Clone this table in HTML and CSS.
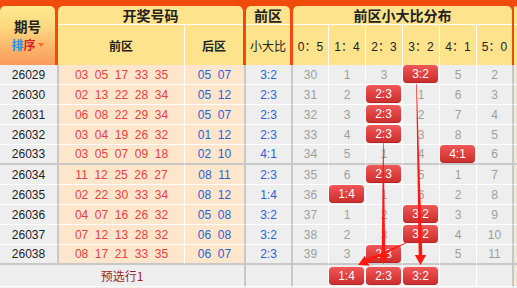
FILE: index.html
```html
<!DOCTYPE html>
<html lang="zh-CN">
<head>
<meta charset="utf-8">
<title>前区小大比分布</title>
<link rel="stylesheet" href="styles.css">
</head>
<body>
<div class="board">
  <div class="head">
    <div class="h-issue">
      <div class="h-issue-title">期号</div>
      <div class="sort"><span class="s1">排</span><span class="s2">序</span><span class="caret"></span></div>
    </div>
    <div class="grp g-draw">
      <div class="g-title">开奖号码</div>
      <div class="g-sub">
        <div class="sub sub-front b">前区</div>
        <div class="sub sub-back b">后区</div>
      </div>
    </div>
    <div class="grp g-ratio">
      <div class="g-title">前区</div>
      <div class="g-sub">
        <div class="sub sub-ratio">小大比</div>
      </div>
    </div>
    <div class="grp g-dist">
      <div class="g-title">前区小大比分布</div>
      <div class="g-sub">
        <div class="sub sd0">0：5</div>
        <div class="sub sd">1：4</div>
        <div class="sub sd">2：3</div>
        <div class="sub sd">3：2</div>
        <div class="sub sd">4：1</div>
        <div class="sub sd5">5：0</div>
      </div>
    </div>
    <div class="grp g-extra"><div class="g-title"></div><div class="g-sub"><div class="sub"></div></div></div>
  </div>

  <div class="rows">
    <div class="row">
      <div class="c issue">26029</div>
      <div class="c front"><span>03</span><span>05</span><span>17</span><span>33</span><span>35</span></div>
      <div class="c back"><span>05</span><span>07</span></div>
      <div class="c ratio">3:2</div>
      <div class="c d d0">30</div><div class="c d">1</div><div class="c d">3</div><div class="c d hit"><span class="badge">3:2</span></div><div class="c d">5</div><div class="c d d5">2</div>
      <div class="c x"></div>
    </div>
    <div class="row">
      <div class="c issue">26030</div>
      <div class="c front"><span>02</span><span>13</span><span>22</span><span>28</span><span>34</span></div>
      <div class="c back"><span>05</span><span>12</span></div>
      <div class="c ratio">2:3</div>
      <div class="c d d0">31</div><div class="c d">2</div><div class="c d hit"><span class="badge">2:3</span></div><div class="c d">1</div><div class="c d">6</div><div class="c d d5">3</div>
      <div class="c x"></div>
    </div>
    <div class="row">
      <div class="c issue">26031</div>
      <div class="c front"><span>06</span><span>08</span><span>22</span><span>29</span><span>34</span></div>
      <div class="c back"><span>05</span><span>07</span></div>
      <div class="c ratio">2:3</div>
      <div class="c d d0">32</div><div class="c d">3</div><div class="c d hit"><span class="badge">2:3</span></div><div class="c d">2</div><div class="c d">7</div><div class="c d d5">4</div>
      <div class="c x"></div>
    </div>
    <div class="row">
      <div class="c issue">26032</div>
      <div class="c front"><span>03</span><span>04</span><span>19</span><span>26</span><span>32</span></div>
      <div class="c back"><span>01</span><span>12</span></div>
      <div class="c ratio">2:3</div>
      <div class="c d d0">33</div><div class="c d">4</div><div class="c d hit"><span class="badge">2:3</span></div><div class="c d">3</div><div class="c d">8</div><div class="c d d5">5</div>
      <div class="c x"></div>
    </div>
    <div class="row sep">
      <div class="c issue">26033</div>
      <div class="c front"><span>03</span><span>05</span><span>07</span><span>09</span><span>18</span></div>
      <div class="c back"><span>02</span><span>10</span></div>
      <div class="c ratio">4:1</div>
      <div class="c d d0">34</div><div class="c d">5</div><div class="c d">1</div><div class="c d">4</div><div class="c d hit"><span class="badge">4:1</span></div><div class="c d d5">6</div>
      <div class="c x"></div>
    </div>
    <div class="row">
      <div class="c issue">26034</div>
      <div class="c front"><span>11</span><span>12</span><span>25</span><span>26</span><span>27</span></div>
      <div class="c back"><span>08</span><span>11</span></div>
      <div class="c ratio">2:3</div>
      <div class="c d d0">35</div><div class="c d">6</div><div class="c d hit"><span class="badge">2:3</span></div><div class="c d">5</div><div class="c d">1</div><div class="c d d5">7</div>
      <div class="c x"></div>
    </div>
    <div class="row">
      <div class="c issue">26035</div>
      <div class="c front"><span>02</span><span>22</span><span>30</span><span>33</span><span>34</span></div>
      <div class="c back"><span>08</span><span>12</span></div>
      <div class="c ratio">1:4</div>
      <div class="c d d0">36</div><div class="c d hit"><span class="badge">1:4</span></div><div class="c d">1</div><div class="c d">6</div><div class="c d">2</div><div class="c d d5">8</div>
      <div class="c x"></div>
    </div>
    <div class="row">
      <div class="c issue">26036</div>
      <div class="c front"><span>04</span><span>07</span><span>16</span><span>26</span><span>32</span></div>
      <div class="c back"><span>05</span><span>08</span></div>
      <div class="c ratio">3:2</div>
      <div class="c d d0">37</div><div class="c d">1</div><div class="c d">2</div><div class="c d hit"><span class="badge">3:2</span></div><div class="c d">3</div><div class="c d d5">9</div>
      <div class="c x"></div>
    </div>
    <div class="row">
      <div class="c issue">26037</div>
      <div class="c front"><span>07</span><span>12</span><span>13</span><span>28</span><span>32</span></div>
      <div class="c back"><span>06</span><span>08</span></div>
      <div class="c ratio">3:2</div>
      <div class="c d d0">38</div><div class="c d">2</div><div class="c d">3</div><div class="c d hit"><span class="badge">3:2</span></div><div class="c d">4</div><div class="c d d5">10</div>
      <div class="c x"></div>
    </div>
    <div class="row sep">
      <div class="c issue">26038</div>
      <div class="c front"><span>08</span><span>17</span><span>21</span><span>33</span><span>35</span></div>
      <div class="c back"><span>06</span><span>07</span></div>
      <div class="c ratio">2:3</div>
      <div class="c d d0">39</div><div class="c d">3</div><div class="c d hit"><span class="badge">2:3</span></div><div class="c d">1</div><div class="c d">5</div><div class="c d d5">11</div>
      <div class="c x"></div>
    </div>
    <div class="row pre">
      <div class="c pre-label">预选行1</div>
      <div class="c ratio"></div>
      <div class="c d d0"></div><div class="c d hit"><span class="badge">1:4</span></div><div class="c d hit"><span class="badge">2:3</span></div><div class="c d hit"><span class="badge">3:2</span></div><div class="c d"></div><div class="c d d5"></div>
      <div class="c x"></div>
    </div>
  </div>

  <svg class="arrows" width="517" height="288" viewBox="0 0 517 288">
    <g fill="#ff1a10">
      <polygon points="416.2,84 416.8,84 422.3,256 418.7,256"/>
      <polygon points="414.8,255 426.2,255 420.5,265"/>
      <polygon points="383,143 383.6,143 385.3,255 381.7,255"/>
      <polygon points="377.8,254 389.2,254 383.5,264"/>
      <polygon points="408.1,242.3 407.9,241.7 366.3,259.2 367.9,262.4"/>
      <polygon points="369.4,265.8 364.8,255.8 358,265"/>
    </g>
  </svg>
</div>
</body>
</html>
```

FILE: styles.css
```css
body {
  margin: 0;
  font-family: "Liberation Sans", "Noto Sans CJK SC", sans-serif;
  font-size: 12px;
  color: #222;
}

.board {
  position: relative;
  width: 517px;
  height: 288px;
  overflow: hidden;
  background: #efeeee;
}

/* ---------- header ---------- */
.head {
  display: flex;
  height: 65px;
  box-sizing: border-box;
  padding-top: 6px;
  background: #f04a0c;
}

.h-issue {
  width: 55px;
  border-radius: 5px 5px 0 0;
  background: linear-gradient(to bottom, #fde98e 0%, #fdd880 35%, #fbb56a 70%, #f99a5c 100%);
  display: flex;
  flex-direction: column;
  align-items: center;
  font-family: "Noto Sans CJK SC", sans-serif;
}

.h-issue-title {
  margin-top: 11.5px;
  height: 16px;
  font-size: 13.5px;
  font-weight: bold;
  line-height: 16px;
}

.sort {
  display: flex;
  align-items: center;
  margin-top: 4px;
  height: 14px;
  font-size: 12px;
  font-weight: bold;
  line-height: 14px;
}

.s1 { color: #1e90e6; }
.s2 { color: #d42222; }

.caret {
  width: 0;
  height: 0;
  margin-left: 2px;
  border-left: 3.5px solid transparent;
  border-right: 3.5px solid transparent;
  border-top: 4px solid #f57020;
}

.grp {
  margin-left: 3px;
  display: flex;
  flex-direction: column;
}

.g-draw { width: 185px; }
.g-ratio { width: 44px; }
.g-dist { width: 219px; }
.g-extra { margin-left: 2px; flex: 1; }

.g-title {
  height: 19px;
  box-sizing: border-box;
  border-bottom: 1px solid #fff;
  border-radius: 5px 5px 0 0;
  background: #fde38c;
  text-align: center;
  font-family: "Noto Sans CJK SC", sans-serif;
  font-size: 14px;
  font-weight: bold;
  line-height: 18px;
}

.g-sub {
  display: flex;
  height: 40px;
}

.sub {
  box-sizing: border-box;
  display: flex;
  align-items: center;
  justify-content: center;
  background: #fde38c;
  border-right: 1px solid #fff;
  font-size: 12px;
}

.sub:last-child { border-right: 0; flex: 1; }

.b {
  font-family: "Noto Sans CJK SC", sans-serif;
  font-weight: bold;
}

.sub-front { width: 127px; }
.sub-back { width: 58px; }
.sub-ratio { font-family: "Noto Sans CJK SC", sans-serif; }
.sd0 { width: 36px; }
.sd { width: 37px; }
.sd5 { width: 35px; }

/* ---------- rows ---------- */
.row {
  display: flex;
  height: 20px;
}

.c {
  box-sizing: border-box;
  display: flex;
  align-items: center;
  justify-content: center;
  height: 100%;
  border-bottom: 1px solid #fff;
}

.row.sep .c { border-bottom: 2px solid #cac7c7; }
.row.pre { height: 22px; }

.issue {
  width: 59px;
  border-right: 2px solid #cac7c7;
  color: #1e1e1e;
}

.front {
  width: 126px;
  gap: 6.6px;
  border-right: 1px solid #fff;
  background: #fee6cc;
  color: #e6403f;
}

.back {
  width: 61px;
  gap: 6.6px;
  border-right: 2px solid #cac7c7;
  background: #fee6cc;
  color: #2b5fd9;
}

.ratio {
  width: 47px;
  border-right: 2px solid #cac7c7;
  color: #2c61d6;
}

.d {
  width: 37px;
  border-right: 1px solid #fff;
  color: #9e9e9e;
}

.d0 { width: 36px; }
.d5 { border-right: 2px solid #cac7c7; }

.x {
  flex: 1;
  background: #f5e7d3;
}

.d.hit {
  align-items: flex-start;
  justify-content: flex-start;
}

.row.pre .d.hit { align-items: center; }

.badge {
  display: block;
  width: 35px;
  height: 18px;
  border-radius: 4px;
  background: linear-gradient(to bottom, #f05858 0%, #de3d3d 55%, #c92e2e 100%);
  box-shadow: inset 0 -1px 0 rgba(120, 0, 0, 0.25);
  color: #fff;
  text-align: center;
  line-height: 18px;
  font-size: 12px;
}

.pre-label {
  width: 246px;
  border-right: 2px solid #cac7c7;
  font-family: "Noto Sans CJK SC", sans-serif;
  color: #9b2424;
}

.arrows {
  position: absolute;
  left: 0;
  top: 0;
  pointer-events: none;
}
```
